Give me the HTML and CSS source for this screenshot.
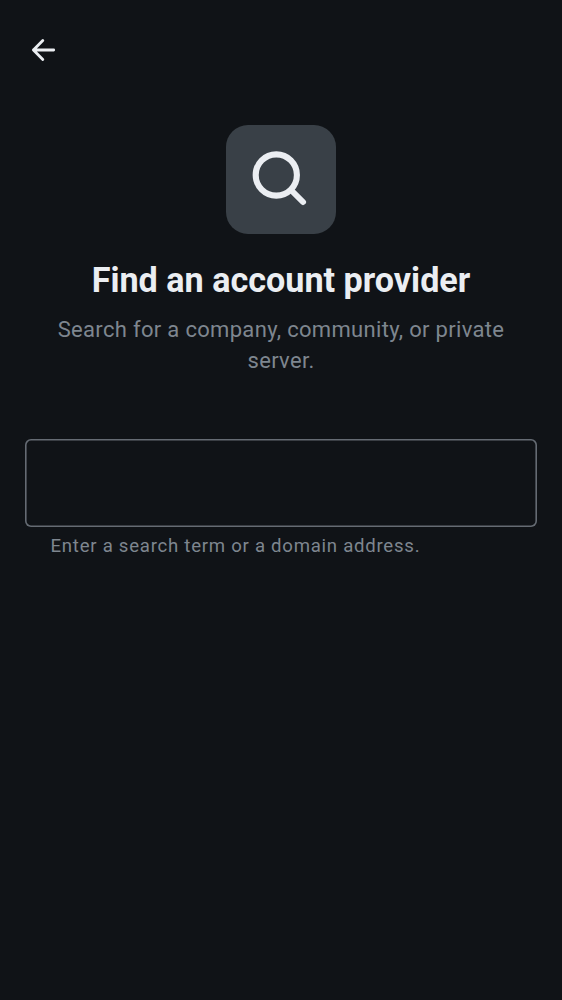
FILE: index.html
```html
<!DOCTYPE html>
<html lang="en">
<head>
<meta charset="utf-8">
<title>Find an account provider</title>
<link rel="stylesheet" href="styles.css">
</head>
<body>
<header class="topbar">
  <button class="back" aria-label="Back"><svg width="26" height="26" viewBox="0 0 26 26"><path d="M12.8 3.5 3.4 13l9.4 9.5M3.4 13H23.7" fill="none" stroke="#ebeef2" stroke-width="2.8" stroke-linecap="round" stroke-linejoin="round"/></svg></button>
</header>
<main class="content">
  <div class="tile"><svg width="110" height="109" viewBox="0 0 110 109"><circle cx="50.3" cy="50" r="20.6" fill="none" stroke="#ebeef2" stroke-width="6.1"/><path d="m66 66 11 11" stroke="#ebeef2" stroke-width="6" stroke-linecap="round"/></svg></div>
  <h1 class="title">Find an account provider</h1>
  <p class="subtitle">Search for a company, community, or private server.</p>
  <input class="field" type="text" aria-label="Account provider">
  <p class="hint">Enter a search term or a domain address.</p>
</main>
</body>
</html>
```
FILE: styles.css
```css
* { box-sizing: border-box; }
body { margin: 0; min-height: 1000px; background: #101317; color: #ebeef2; font-family: Roboto, sans-serif; }
.topbar { height: 100px; padding: 37px 0 0 30px; }
.back { display: block; padding: 0; border: 0; background: none; }
.back svg, .tile svg { display: block; }
.content { display: flex; flex-direction: column; align-items: center; padding: 25px 25px 0; }
.tile { width: 110px; height: 109.4px; border-radius: 22px; background: #394047; }
.title { margin: 24.1px 0 0; font-size: 34.15px; line-height: 44px; font-weight: 700; white-space: nowrap; }
.subtitle { margin: 11.4px 0 0; width: 460px; text-align: center; font-size: 22px; line-height: 31.5px; letter-spacing: .32px; color: #7e868f; }
.field { width: 512px; height: 87.6px; margin-top: 62.2px; padding: 0 24px; border: 0; border-radius: 6px; box-shadow: inset 0 0 0 1.6px #656b73; background: transparent; color: inherit; font: 24px Roboto, sans-serif; outline: 0; }
.hint { align-self: flex-start; margin: 7.3px 0 0 25.5px; font-size: 18.6px; line-height: 25px; letter-spacing: .74px; color: #7e868f; }
```
